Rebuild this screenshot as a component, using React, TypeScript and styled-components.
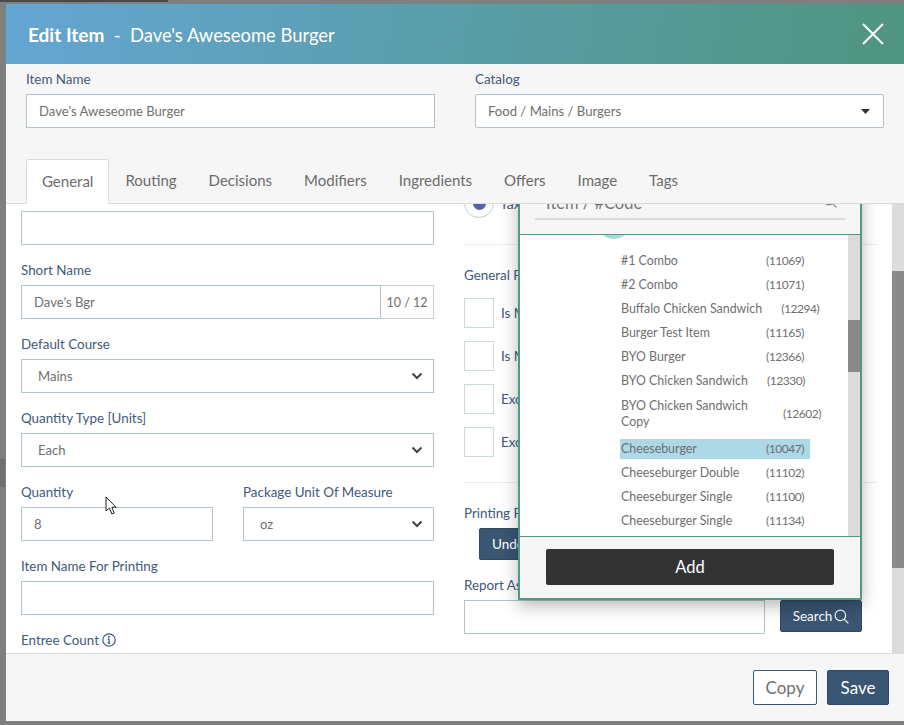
import React from "react";
import styled, { createGlobalStyle } from "styled-components";

const GlobalStyle = createGlobalStyle`
	html, body {
		margin: 0;
		padding: 0;
		background: #7f7f7f;
	}
	* {
		box-sizing: border-box;
	}
`;

const Page = styled.div`
	width: 904px;
	height: 725px;
	padding: 4px 0 4px 6px;
	overflow: hidden;
	font-family: "Lato", "Noto Sans", sans-serif;
	font-size: 14px;
	background:
		linear-gradient(#4a4a4a, #4a4a4a) 0 0 / 168px 2px no-repeat,
		linear-gradient(#707070, #707070) 0 459px / 5px 28px no-repeat,
		#7f7f7f;
`;

const Modal = styled.div`
	height: 717px;
	display: flex;
	flex-direction: column;
	background: #f6f6f6;
`;

const Header = styled.header`
	height: 60px;
	flex: none;
	display: flex;
	align-items: center;
	justify-content: space-between;
	padding: 0 19px 0 22px;
	background: linear-gradient(100deg, #64a6d3, #4f957f);
	color: #fff;
	font-size: 18.4px;
`;

const Title = styled.div`
	white-space: pre;
	b {
		font-size: 19px;
		font-weight: 700;
	}
`;

const TopFields = styled.div`
	flex: none;
	height: 95px;
	display: grid;
	grid-template-columns: 409px 409px;
	column-gap: 40px;
	padding: 5px 0 0 20px;
`;

const Label = styled.label`
	display: block;
	height: 20px;
	line-height: 20px;
	color: #41597a;
	font-size: 13.4px;
	white-space: nowrap;
`;

const Input = styled.div<{ $radius?: boolean; $flex?: boolean; $flush?: boolean }>`
	height: 34px;
	margin-top: ${(p) => (p.$flush ? 0 : 5)}px;
	display: flex;
	align-items: center;
	justify-content: space-between;
	padding: 0 12px;
	background: #fff;
	border: 1px solid #afc4cc;
	border-radius: ${(p) => (p.$radius ? "2px" : "0")};
	color: #6f6f6f;
	font-size: 13.1px;
	${(p) => p.$flex && "flex: 1;"}
`;

const SelectBox = styled(Input)<{ $inset?: number }>`
	padding: 0 10px 0 ${(p) => p.$inset ?? 16}px;
`;

const Tabs = styled.nav`
	flex: none;
	height: 45px;
	display: flex;
	padding-left: 20px;
	border-bottom: 1px solid #dcdcdc;
`;

const Tab = styled.div<{ $active?: boolean }>`
	height: 45px;
	padding: 0 16px 3px;
	display: flex;
	align-items: center;
	font-size: 15px;
	color: #6b6b6b;
	${(p) =>
		p.$active &&
		`
		padding: 0 15px 3px;
		background: #fff;
		border: 1px solid #dcdcdc;
		border-bottom: 0;
		border-radius: 3px 3px 0 0;
	`}
`;

const ScrollArea = styled.div`
	flex: 1;
	min-height: 0;
	position: relative;
	display: flex;
	overflow: hidden;
	background: #fff;
`;

const Columns = styled.div`
	flex: 1;
	display: grid;
	grid-template-columns: 413px 413px;
	column-gap: 30px;
	padding-left: 15px;
	align-items: start;
`;

const LeftColumn = styled.div`
	padding-top: 7px;
`;

const RightColumn = styled.div`
	margin-top: -16px;
`;

const Field = styled.div`
	margin-bottom: 15px;
`;

const Pair = styled.div`
	display: grid;
	grid-template-columns: 192px 191px;
	column-gap: 30px;
`;

const InputGroup = styled.div`
	display: flex;
	margin-top: 5px;
`;

const Counter = styled.div`
	width: 53px;
	height: 34px;
	display: flex;
	align-items: center;
	justify-content: center;
	border: 1px solid #c4d2d8;
	border-left: 0;
	color: #6f6f6f;
	font-size: 12.5px;
`;

const InfoLabel = styled(Label)`
	display: flex;
	align-items: center;
	gap: 3px;
`;

const RadioRow = styled.div`
	display: flex;
	align-items: center;
	gap: 6px;
	height: 30px;
	color: #41597a;
`;

const Radio = styled.div`
	width: 30px;
	height: 30px;
	display: flex;
	align-items: center;
	justify-content: center;
	border: 1px solid #bcd0d4;
	border-radius: 50%;
	&::after {
		content: "";
		width: 13px;
		height: 13px;
		border-radius: 50%;
		background: #5660ad;
	}
`;

const Divider = styled.hr<{ $after: number }>`
	margin: ${(p) => p.$after}px 0 0;
	border: 0;
	border-top: 1px solid #ececec;
`;

const SectionTitle = styled(Label)<{ $top: number }>`
	margin-top: ${(p) => p.$top}px;
`;

const CheckRow = styled.div`
	display: flex;
	align-items: center;
	gap: 7px;
	height: 30px;
	margin-top: 13px;
	color: #41597a;
	font-size: 13.4px;
`;

const CheckBox = styled.div`
	width: 30px;
	height: 30px;
	border: 1px solid #ccd9dc;
`;

const SolidButton = styled.button<{ $big?: boolean }>`
	height: ${(p) => (p.$big ? 35 : 32)}px;
	width: ${(p) => (p.$big ? "62px" : "auto")};
	padding: 0 ${(p) => (p.$big ? 0 : 12)}px;
	background: #395673;
	border: 1px solid #2f4a66;
	border-radius: 2px;
	color: #fff;
	font-family: inherit;
	font-size: ${(p) => (p.$big ? 17 : 13.5)}px;
	display: inline-flex;
	align-items: center;
	justify-content: center;
`;

const PrintButton = styled(SolidButton)`
	display: flex;
	width: 120px;
	margin: 5px 0 0 15px;
	justify-content: flex-start;
`;

const ReportRow = styled.div`
	display: flex;
	align-items: flex-start;
	gap: 15px;
	margin-top: 5px;
`;

const ReportInput = styled(Input)`
	width: 301px;
	flex: none;
`;

const SearchButton = styled(SolidButton)`
	width: 82px;
	gap: 2px;
	padding: 0;
`;

const Scrollbar = styled.div`
	width: 12px;
	flex: none;
	background: #dcdcdc;
`;

const Thumb = styled.div<{ $top: number; $height: number }>`
	margin-top: ${(p) => p.$top}px;
	height: ${(p) => p.$height}px;
	background: #8a8a8a;
`;

const Cursor = styled.svg`
	position: absolute;
	left: 99px;
	top: 292px;
`;

const Popover = styled.div`
	position: absolute;
	left: 512px;
	top: -30px;
	width: 344px;
	height: 426px;
	display: flex;
	flex-direction: column;
	background: #f6f6f6;
	border: 2px solid #4f9a85;
	box-shadow: 0 6px 16px rgba(0, 0, 0, 0.28);
`;

const PopoverSearch = styled.div`
	height: 59px;
	flex: none;
	padding: 0 15px;
	border-bottom: 1px solid #4f9a85;
`;

const SearchLine = styled.div`
	height: 44px;
	padding: 0 8px 3px 11px;
	display: flex;
	align-items: flex-end;
	justify-content: space-between;
	border-bottom: 2px solid #dcdcdc;
	color: #777;
	font-size: 16.5px;
	line-height: 24px;
	svg {
		margin-bottom: 7px;
	}
`;

const ListWrap = styled.div`
	flex: 1;
	min-height: 0;
	display: flex;
	background: #fff;
	position: relative;
	overflow: hidden;
`;

const ExpandDot = styled.div`
	position: absolute;
	left: 82px;
	top: -12px;
	width: 24px;
	height: 16px;
	border-radius: 50%;
	background: #a8d8d8;
`;

const List = styled.ul`
	flex: 1;
	list-style: none;
	margin: 0;
	padding: 16px 0 0 100px;
`;

const Row = styled.li<{ $selected?: boolean; $tall?: boolean }>`
	width: fit-content;
	min-width: 190px;
	min-height: 20px;
	margin-bottom: ${(p) => (p.$tall ? 9 : 4)}px;
	padding: ${(p) => (p.$tall ? 3 : 0)}px 6px 0 1px;
	display: flex;
	align-items: center;
	justify-content: space-between;
	gap: 19px;
	color: #6f6f6f;
	font-size: 12.4px;
	line-height: 16px;
	background: ${(p) => (p.$selected ? "#add8e6" : "transparent")};
`;

const Code = styled.span<{ $push?: number }>`
	margin-left: ${(p) => p.$push ?? 0}px;
	white-space: nowrap;
	font-size: 12px;
	letter-spacing: -0.45px;
`;

const PopoverFooter = styled.div`
	flex: none;
	height: 62px;
	padding: 12px 26px 0;
	border-top: 1px solid #4f9a85;
`;

const AddButton = styled.button`
	width: 288px;
	height: 36px;
	background: #333;
	border: 0;
	border-radius: 2px;
	color: #fff;
	font-family: inherit;
	font-size: 16.5px;
`;

const Footer = styled.footer`
	flex: none;
	height: 68px;
	display: flex;
	justify-content: flex-end;
	gap: 10px;
	padding: 16px 15px 0 0;
	border-top: 1px solid #dcdcdc;
`;

const OutlineButton = styled.button`
	height: 35px;
	width: 64px;
	background: #fff;
	border: 1px solid #395673;
	border-radius: 2px;
	color: #6f6f6f;
	font-family: inherit;
	font-size: 17px;
`;

const Chevron = () => (
	<svg width="12" height="8" viewBox="0 0 12 8">
		<path d="M1.5 1.5 6 6l4.5-4.5" fill="none" stroke="#444" strokeWidth="2" />
	</svg>
);

const SearchIcon = ({ color, size }: { color: string; size: number }) => (
	<svg width={size} height={size} viewBox="0 0 16 16" fill="none" stroke={color} strokeWidth="1.2">
		<circle cx="6.8" cy="6.8" r="5.6" />
		<path d="m11 11 4.3 4.3" />
	</svg>
);

const rows = [
	{ name: "#1 Combo", code: "(11069)" },
	{ name: "#2 Combo", code: "(11071)" },
	{ name: "Buffalo Chicken Sandwich", code: "(12294)" },
	{ name: "Burger Test Item", code: "(11165)" },
	{ name: "BYO Burger", code: "(12366)" },
	{ name: "BYO Chicken Sandwich", code: "(12330)" },
];

const lowerRows = [
	{ name: "Cheeseburger Double", code: "(11102)" },
	{ name: "Cheeseburger Single", code: "(11100)" },
	{ name: "Cheeseburger Single", code: "(11134)" },
];

const App = () => {
	return (
		<Page>
			<GlobalStyle />
			<Modal>
				<Header>
					<Title>
						<b>Edit Item</b>
						{"  -  Dave's Aweseome Burger"}
					</Title>
					<svg width="24" height="24" viewBox="0 0 24 24">
						<path d="M2 2l20 20M22 2 2 22" stroke="#fff" strokeWidth="2" />
					</svg>
				</Header>

				<TopFields>
					<div>
						<Label>Item Name</Label>
						<Input>Dave's Aweseome Burger</Input>
					</div>
					<div>
						<Label>Catalog</Label>
						<Input $radius>
							Food / Mains / Burgers
							<svg width="10" height="5" viewBox="0 0 10 5">
								<path d="M0 0h9L4.5 5z" fill="#333" />
							</svg>
						</Input>
					</div>
				</TopFields>

				<Tabs>
					<Tab $active>General</Tab>
					<Tab>Routing</Tab>
					<Tab>Decisions</Tab>
					<Tab>Modifiers</Tab>
					<Tab>Ingredients</Tab>
					<Tab>Offers</Tab>
					<Tab>Image</Tab>
					<Tab>Tags</Tab>
				</Tabs>

				<ScrollArea>
					<Columns>
						<LeftColumn>
							<Field>
								<Input $flush />
							</Field>
							<Field>
								<Label>Short Name</Label>
								<InputGroup>
									<Input $flex $flush>
										Dave's Bgr
									</Input>
									<Counter>10 / 12</Counter>
								</InputGroup>
							</Field>
							<Field>
								<Label>Default Course</Label>
								<SelectBox>
									Mains
									<Chevron />
								</SelectBox>
							</Field>
							<Field>
								<Label>Quantity Type [Units]</Label>
								<SelectBox>
									Each
									<Chevron />
								</SelectBox>
							</Field>
							<Pair>
								<Field>
									<Label>Quantity</Label>
									<Input>8</Input>
								</Field>
								<Field>
									<Label>Package Unit Of Measure</Label>
									<SelectBox>
										oz
										<Chevron />
									</SelectBox>
								</Field>
							</Pair>
							<Field>
								<Label>Item Name For Printing</Label>
								<Input />
							</Field>
							<InfoLabel>
								Entree Count
								<svg width="14" height="14" viewBox="0 0 14 14" fill="none" stroke="#41597a">
									<circle cx="7" cy="7" r="6.2" strokeWidth="1.2" />
									<path d="M7 6v4.2M5.6 10.2h2.8M5.8 6H7" strokeWidth="1.3" />
									<circle cx="7" cy="3.8" r="0.6" fill="#41597a" />
								</svg>
							</InfoLabel>
						</LeftColumn>

						<RightColumn>
							<RadioRow>
								<Radio />
								Tax
							</RadioRow>
							<Divider $after={26} />
							<SectionTitle $top={20}>General P</SectionTitle>
							<CheckRow>
								<CheckBox />
								Is M
							</CheckRow>
							<CheckRow>
								<CheckBox />
								Is M
							</CheckRow>
							<CheckRow>
								<CheckBox />
								Exc
							</CheckRow>
							<CheckRow>
								<CheckBox />
								Exc
							</CheckRow>
							<Divider $after={25} />
							<SectionTitle $top={20}>Printing P</SectionTitle>
							<PrintButton>Unde</PrintButton>
							<SectionTitle $top={15}>Report As</SectionTitle>
							<ReportRow>
								<ReportInput $flush />
								<SearchButton>
									Search
									<SearchIcon color="#fff" size={15} />
								</SearchButton>
							</ReportRow>
						</RightColumn>
					</Columns>

					<Scrollbar>
						<Thumb $top={67} $height={297} />
					</Scrollbar>

					<Cursor width="13" height="20" viewBox="0 0 13 20">
						<path
							d="M1 1v14l3.4-3 2.4 6 2.4-1-2.4-5.8H11z"
							fill="#fff"
							stroke="#222"
							strokeWidth="1"
							strokeLinejoin="miter"
						/>
					</Cursor>

					<Popover>
						<PopoverSearch>
							<SearchLine>
								Item / #Code
								<SearchIcon color="#777" size={14} />
							</SearchLine>
						</PopoverSearch>
						<ListWrap>
							<ExpandDot />
							<List>
								{rows.map((row) => (
									<Row key={row.code}>
										<span>{row.name}</span>
										<Code>{row.code}</Code>
									</Row>
								))}
								<Row $tall>
									<span>
										BYO Chicken Sandwich
										<br />
										Copy
									</span>
									<Code $push={16}>(12602)</Code>
								</Row>
								<Row $selected>
									<span>Cheeseburger</span>
									<Code>(10047)</Code>
								</Row>
								{lowerRows.map((row) => (
									<Row key={row.code}>
										<span>{row.name}</span>
										<Code>{row.code}</Code>
									</Row>
								))}
							</List>
							<Scrollbar>
								<Thumb $top={85} $height={52} />
							</Scrollbar>
						</ListWrap>
						<PopoverFooter>
							<AddButton>Add</AddButton>
						</PopoverFooter>
					</Popover>
				</ScrollArea>

				<Footer>
					<OutlineButton>Copy</OutlineButton>
					<SolidButton $big>Save</SolidButton>
				</Footer>
			</Modal>
		</Page>
	);
};

export default App;
